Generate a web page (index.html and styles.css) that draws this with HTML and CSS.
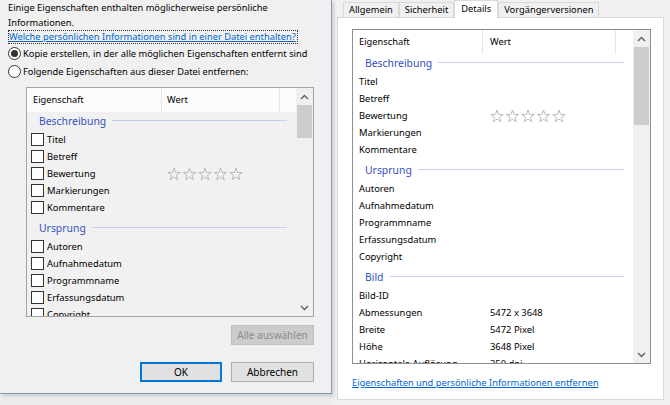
FILE: index.html
```html
<!DOCTYPE html>
<html lang="de">
<head>
<meta charset="utf-8">
<title>Eigenschaften entfernen</title>
<link rel="stylesheet" href="styles.css">
</head>
<body>
<svg class="defs" width="0" height="0">
  <defs>
    <polygon id="star" points="7,1 8.53,5.4 13.18,5.49 9.47,8.3 10.82,12.76 7,10.1 3.18,12.76 4.53,8.3 0.82,5.49 5.47,5.4"/>
    <symbol id="stars" viewBox="0 0 78 14">
      <use href="#star"/>
      <use href="#star" x="15.5"/>
      <use href="#star" x="31"/>
      <use href="#star" x="46.5"/>
      <use href="#star" x="62"/>
    </symbol>
    <symbol id="up" viewBox="0 0 9 6"><polyline points="1,5 4.5,1.5 8,5"/></symbol>
    <symbol id="down" viewBox="0 0 9 6"><polyline points="1,1 4.5,4.5 8,1"/></symbol>
  </defs>
</svg>
<div class="screen">
  <section class="dlg-left">
    <p class="intro">Einige Eigenschaften enthalten möglicherweise persönliche Informationen.</p>
    <a class="link focus">Welche persönlichen Informationen sind in einer Datei enthalten?</a>
    <div class="radio checked"><span class="rb"></span><span>Kopie erstellen, in der alle möglichen Eigenschaften entfernt sind</span></div>
    <div class="radio"><span class="rb"></span><span>Folgende Eigenschaften aus dieser Datei entfernen:</span></div>
    <div class="lv lv-left">
      <div class="lv-body">
        <div class="lv-head"><span class="hc hc1">Eigenschaft</span><span class="hc hc2">Wert</span><span class="hc hc3"></span></div>
        <div class="grp first"><span>Beschreibung</span><i></i></div>
        <div class="row"><span class="cb"></span><span class="c1">Titel</span></div>
        <div class="row"><span class="cb"></span><span class="c1">Betreff</span></div>
        <div class="row"><span class="cb"></span><span class="c1">Bewertung</span><svg class="stars"><use href="#stars"/></svg></div>
        <div class="row"><span class="cb"></span><span class="c1">Markierungen</span></div>
        <div class="row"><span class="cb"></span><span class="c1">Kommentare</span></div>
        <div class="grp"><span>Ursprung</span><i></i></div>
        <div class="row"><span class="cb"></span><span class="c1">Autoren</span></div>
        <div class="row"><span class="cb"></span><span class="c1">Aufnahmedatum</span></div>
        <div class="row"><span class="cb"></span><span class="c1">Programmname</span></div>
        <div class="row"><span class="cb"></span><span class="c1">Erfassungsdatum</span></div>
        <div class="row"><span class="cb"></span><span class="c1">Copyright</span></div>
      </div>
      <div class="sb">
        <span class="arr"><svg><use href="#up"/></svg></span>
        <span class="thumb"></span>
        <span class="track"></span>
        <span class="arr"><svg><use href="#down"/></svg></span>
      </div>
    </div>
    <div class="btns-top"><button class="btn" disabled>Alle auswählen</button></div>
    <div class="btns-bottom"><button class="btn default">OK</button><button class="btn">Abbrechen</button></div>
  </section>

  <section class="dlg-right">
    <nav class="tabs">
      <span class="tab">Allgemein</span>
      <span class="tab">Sicherheit</span>
      <span class="tab active">Details</span>
      <span class="tab">Vorgängerversionen</span>
    </nav>
    <div class="tabpage">
      <div class="lv lv-right">
        <div class="lv-body">
          <div class="lv-head"><span class="hc hc1">Eigenschaft</span><span class="hc hc2">Wert</span><span class="hc hc3"></span></div>
          <div class="grp first"><span>Beschreibung</span><i></i></div>
          <div class="row"><span class="c1">Titel</span></div>
          <div class="row"><span class="c1">Betreff</span></div>
          <div class="row"><span class="c1">Bewertung</span><svg class="stars"><use href="#stars"/></svg></div>
          <div class="row"><span class="c1">Markierungen</span></div>
          <div class="row"><span class="c1">Kommentare</span></div>
          <div class="grp"><span>Ursprung</span><i></i></div>
          <div class="row"><span class="c1">Autoren</span></div>
          <div class="row"><span class="c1">Aufnahmedatum</span></div>
          <div class="row"><span class="c1">Programmname</span></div>
          <div class="row"><span class="c1">Erfassungsdatum</span></div>
          <div class="row"><span class="c1">Copyright</span></div>
          <div class="grp"><span>Bild</span><i></i></div>
          <div class="row"><span class="c1">Bild-ID</span></div>
          <div class="row"><span class="c1">Abmessungen</span><span class="c2">5472 x 3648</span></div>
          <div class="row"><span class="c1">Breite</span><span class="c2">5472 Pixel</span></div>
          <div class="row"><span class="c1">Höhe</span><span class="c2">3648 Pixel</span></div>
          <div class="row"><span class="c1">Horizontale Auflösung</span><span class="c2">350 dpi</span></div>
        </div>
        <div class="sb">
          <span class="arr"><svg><use href="#up"/></svg></span>
          <span class="thumb"></span>
          <span class="track"></span>
          <span class="arr"><svg><use href="#down"/></svg></span>
        </div>
      </div>
      <a class="link bottom-link">Eigenschaften und persönliche Informationen entfernen</a>
    </div>
  </section>
</div>
</body>
</html>
```

FILE: styles.css
```css
* { box-sizing: border-box; }
html, body { margin: 0; padding: 0; }
body {
  width: 670px;
  height: 405px;
  overflow: hidden;
  background: #ececec;
  font-family: "Noto Sans", "DejaVu Sans", sans-serif;
  font-size: 9.3px;
  color: #000;
}
.defs { position: absolute; width: 0; height: 0; }
.screen { display: flex; height: 405px; align-items: flex-start; }

/* ---------- left dialog ---------- */
.dlg-left {
  width: 332px;
  height: 394px;
  flex: none;
  background: #f0f0f0;
  border-right: 1px solid #7f9fc0;
  border-bottom: 1px solid #7f9fc0;
  box-shadow: 2px 2px 3px rgba(0,0,0,0.14);
  position: relative;
  z-index: 2;
  padding: 1px 17px 0 8px;
  display: flex;
  flex-direction: column;
}
.dlg-left > * { flex: none; }
.intro { margin: 0; line-height: 14.5px; width: 270px; }
.link { color: #0066cc; text-decoration: underline; cursor: pointer; }
.focus {
  align-self: flex-start;
  border: 1px dotted #333;
  line-height: 12px;
  padding: 0 1px 0 0;
}
.radio { display: flex; align-items: center; height: 18px; gap: 2px; white-space: nowrap; }
.rb {
  width: 13px; height: 13px; border-radius: 50%;
  border: 1px solid #333; background: #fff;
  display: flex; align-items: center; justify-content: center;
  flex: none;
}
.radio.checked .rb::after {
  content: ""; width: 7px; height: 7px; border-radius: 50%; background: #333;
}

/* ---------- list views ---------- */
.lv { display: flex; border: 1px solid #a3a3a3; overflow: hidden; }
.lv-left { margin: 7px 0 0 18px; height: 230px; background: #f1f1f1; }
.lv-right { height: 335px; background: #fff; border-color: #8d8f94; flex: none; }
.lv-body { flex: 1; overflow: hidden; }
.lv-head { display: flex; height: 24px; align-items: center; }
.lv-left .lv-head { background: #fbfbfb; }
.hc { height: 24px; line-height: 24px; border-right: 1px solid #e5e5e5; padding-left: 6px; }
.hc3 { border-right: none; flex: 1; }
.lv-left .hc1 { width: 135px; }
.lv-left .hc2 { width: 118px; padding-left: 5px; }
.lv-right .hc1 { width: 130px; }
.lv-right .hc2 { width: 133px; padding-left: 7px; }

.grp {
  display: flex; align-items: center; height: 19px;
  padding: 0 9px 2px 12px; margin-top: 3px;
  color: #3350bf; font-size: 10.4px;
}
.grp.first { margin-top: 0; }
.grp i { flex: 1; height: 1px; background: #c3cfec; margin-left: 6px; }

.row { display: flex; align-items: center; height: 17px; white-space: nowrap; font-size: 9.4px; }
.lv-left .row { padding-left: 4px; }
.lv-right .row { padding-left: 6px; }
.cb { width: 13px; height: 13px; border: 1px solid #333; background: #fff; flex: none; margin-right: 3px; }
.lv-left .c1 { width: 120px; }
.lv-right .c1 { width: 131px; }
.stars { width: 78px; height: 14px; fill: none; stroke: #b3b3b3; stroke-width: 0.9; }

/* scrollbar */
.sb { width: 17px; flex: none; display: flex; flex-direction: column; background: #f0f0f0; }
.arr { height: 17px; display: flex; align-items: center; justify-content: center; flex: none; }
.arr svg { width: 9px; height: 6px; fill: none; stroke: #606060; stroke-width: 1.4; }
.thumb { background: #cdcdcd; margin: 0 1px; flex: none; }
.lv-left .thumb { height: 33px; }
.lv-right .thumb { height: 78px; }
.track { flex: 1; }

/* buttons */
.btns-top, .btns-bottom { display: flex; justify-content: flex-end; gap: 9px; }
.btns-top { margin-top: 8px; }
.btns-bottom { margin-top: 17px; }
.btn {
  font: inherit; font-size: 10px;
  height: 20px; width: 83px; padding: 0;
  background: #e1e1e1; border: 1px solid #adadad; color: #000;
}
.btn:disabled { background: #cccccc; border-color: #bfbfbf; color: #8b8b8b; }
.btn.default { width: 82px; border: 2px solid #0078d7; }

/* ---------- right dialog ---------- */
.dlg-right {
  flex: 1;
  height: 405px;
  background: #f0f0f0;
  padding: 0 6px 0 5px;
  display: flex;
  flex-direction: column;
}
.tabs { display: flex; align-items: flex-end; height: 17px; padding-left: 6px; position: relative; z-index: 1; flex: none; }
.tab {
  height: 15px; line-height: 14px; padding: 0 5px;
  border: 1px solid #d9d9d9; border-bottom: none;
  background: #f0f0f0; white-space: nowrap;
  font-size: 9.3px;
}
.tab.active { height: 18px; line-height: 16px; padding: 0 6px; background: #fff; margin-bottom: -1px; position: relative; }
.tabpage {
  height: 383px;
  flex: none;
  background: #fff;
  border: 1px solid #d9d9d9;
  padding: 11px 12px 0 14px;
  display: flex; flex-direction: column;
}
.bottom-link { margin-top: 12px; line-height: 14px; align-self: flex-start; }
```
